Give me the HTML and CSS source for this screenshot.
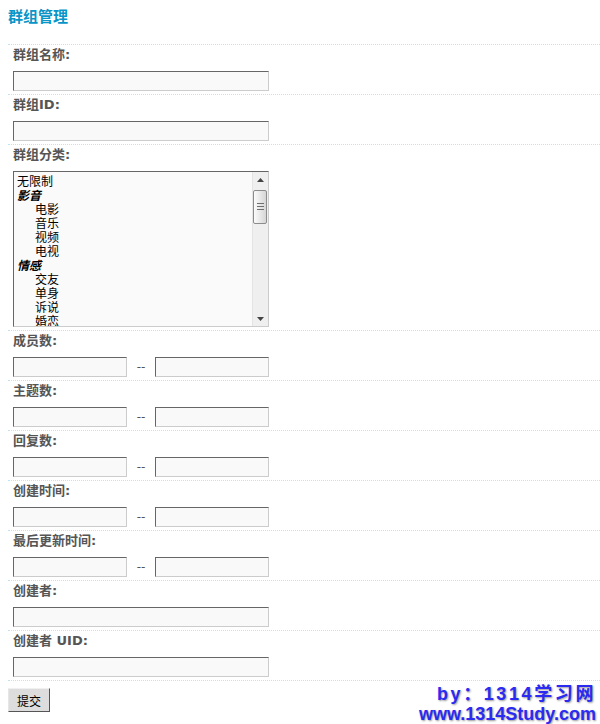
FILE: index.html
```html
<!DOCTYPE html>
<html lang="zh-CN">
    <head>
        <meta charset="utf-8">
        <title>群组管理</title>
        <link rel="stylesheet" href="styles.css">
    </head>

    <body>
        <h2 class="titulo">群组管理</h2>
        <form class="form-grupo" onsubmit="return false;">
            <div class="linha">
                <label for="nome">群组名称:</label>
                <input id="nome" type="text" name="name">
            </div>
            <div class="linha">
                <label for="gid">群组ID:</label>
                <input id="gid" type="text" name="gid">
            </div>
            <div class="linha">
                <label>群组分类:</label>
                <!-- lista de categorias com barra de rolagem desenhada -->
                <div class="lista" role="listbox" aria-multiselectable="true">
                    <div class="lista-itens">
                        <div class="opcao" role="option">无限制</div>
                        <div class="grupo">影音</div>
                        <div class="opcao sub" role="option">电影</div>
                        <div class="opcao sub" role="option">音乐</div>
                        <div class="opcao sub" role="option">视频</div>
                        <div class="opcao sub" role="option">电视</div>
                        <div class="grupo">情感</div>
                        <div class="opcao sub" role="option">交友</div>
                        <div class="opcao sub" role="option">单身</div>
                        <div class="opcao sub" role="option">诉说</div>
                        <div class="opcao sub" role="option">婚恋</div>
                    </div>
                    <div class="barra">
                        <span class="seta">
                            <svg width="7" height="4" viewBox="0 0 7 4"><path d="M0 4L3.5 0L7 4Z" fill="#444"/></svg>
                        </span>
                        <div class="trilho"><span class="cursor"></span></div>
                        <span class="seta">
                            <svg width="7" height="4" viewBox="0 0 7 4"><path d="M0 0L3.5 4L7 0Z" fill="#444"/></svg>
                        </span>
                    </div>
                </div>
            </div>
            <div class="linha">
                <label>成员数:</label>
                <div class="intervalo">
                    <input type="text" name="members_min"><span class="traco">--</span><input type="text" name="members_max">
                </div>
            </div>
            <div class="linha">
                <label>主题数:</label>
                <div class="intervalo">
                    <input type="text" name="threads_min"><span class="traco">--</span><input type="text" name="threads_max">
                </div>
            </div>
            <div class="linha">
                <label>回复数:</label>
                <div class="intervalo">
                    <input type="text" name="posts_min"><span class="traco">--</span><input type="text" name="posts_max">
                </div>
            </div>
            <div class="linha">
                <label>创建时间:</label>
                <div class="intervalo">
                    <input type="text" name="created_min"><span class="traco">--</span><input type="text" name="created_max">
                </div>
            </div>
            <div class="linha">
                <label>最后更新时间:</label>
                <div class="intervalo">
                    <input type="text" name="updated_min"><span class="traco">--</span><input type="text" name="updated_max">
                </div>
            </div>
            <div class="linha">
                <label for="criador">创建者:</label>
                <input id="criador" type="text" name="founder">
            </div>
            <div class="linha">
                <label for="uid">创建者 UID:</label>
                <input id="uid" type="text" name="founder_uid">
            </div>
        </form>
        <button class="enviar" type="button">提交</button>

        <div class="marca"><span class="marca-by">by：1314学习网</span><br>www.1314Study.com</div>
    </body>
</html>
```

FILE: styles.css
```css
body {
    margin: 8px 0 0 8px;
    font-family: "DejaVu Sans", "Noto Sans CJK SC", sans-serif;
    font-size: 13px;
    color: #555;
    background-color: #fff;
}

.titulo {
    margin: 0;
    padding-bottom: 17px;
    font-size: 15px;
    line-height: 19px;
    color: #0995c8;
}

.form-grupo {
    margin: 0;
    border-bottom: 1px dotted #bde3f7;
}

.linha {
    border-top: 1px dotted #bde3f7;
    padding: 3px 5px;
}

.linha label {
    display: block;
    height: 14px;
    line-height: 14px;
    margin-bottom: 9px;
    font-weight: bold;
}

.linha input {
    display: block;
    box-sizing: border-box;
    width: 256px;
    height: 20px;
    margin: 0;
    padding: 1px 3px;
    border: 1px solid;
    border-color: #666 #ccc #ccc #666;
    background-color: #f9f9f9;
    font-size: 12px;
}

.intervalo {
    display: flex;
    align-items: center;
}

.intervalo input {
    width: 114px;
}

.traco {
    width: 28px;
    text-align: center;
    font-size: 12px;
    color: #555;
}

/* lista */
.lista {
    display: flex;
    box-sizing: border-box;
    width: 256px;
    height: 156px;
    border: 1px solid;
    border-color: #666 #ccc #ccc #666;
    background-color: #fafafa;
}

.lista-itens {
    flex: 1;
    overflow: hidden;
    padding: 2px 0 0 3px;
    font-family: "Noto Sans CJK SC", sans-serif;
    font-size: 12px;
    line-height: 14px;
    color: #000;
}

.opcao,
.grupo {
    height: 14px;
    white-space: nowrap;
}

.grupo {
    font-weight: bold;
    font-style: italic;
}

.opcao.sub {
    padding-left: 18px;
}

.barra {
    display: flex;
    flex-direction: column;
    width: 16px;
    box-sizing: border-box;
    border-left: 1px solid #e4e4e4;
    background-color: #efefef;
}

.seta {
    display: flex;
    align-items: center;
    justify-content: center;
    height: 15px;
    flex: none;
}

.trilho {
    flex: 1;
    padding: 3px 1px 0 0;
}

.cursor {
    display: block;
    box-sizing: border-box;
    height: 34px;
    border: 1px solid #8c8c8c;
    border-radius: 2px;
    background:
        linear-gradient(#6e6e6e, #6e6e6e) center calc(50% - 4px) / 7px 1px no-repeat,
        linear-gradient(#6e6e6e, #6e6e6e) center calc(50% - 1px) / 7px 1px no-repeat,
        linear-gradient(#6e6e6e, #6e6e6e) center calc(50% + 2px) / 7px 1px no-repeat,
        linear-gradient(to right, #fbfbfb, #d6d6d6);
}

.enviar {
    display: block;
    box-sizing: border-box;
    width: 42px;
    height: 24px;
    margin-top: 7px;
    padding: 0;
    border: 1px solid;
    border-color: #f0f0f0 #555 #555 #e6e6e6;
    background-color: #ddd;
    font-family: "Noto Sans CJK SC", sans-serif;
    font-size: 12px;
    color: #000;
}

.marca {
    position: absolute;
    right: 4px;
    top: 684px;
    text-align: right;
    font-family: "Liberation Sans", "Noto Sans CJK SC", sans-serif;
    font-size: 18px;
    font-weight: bold;
    line-height: 20px;
    color: #2a2af2;
    text-shadow: 1px 1px 2px #999;
}

.marca-by {
    letter-spacing: 2.6px;
}
```
